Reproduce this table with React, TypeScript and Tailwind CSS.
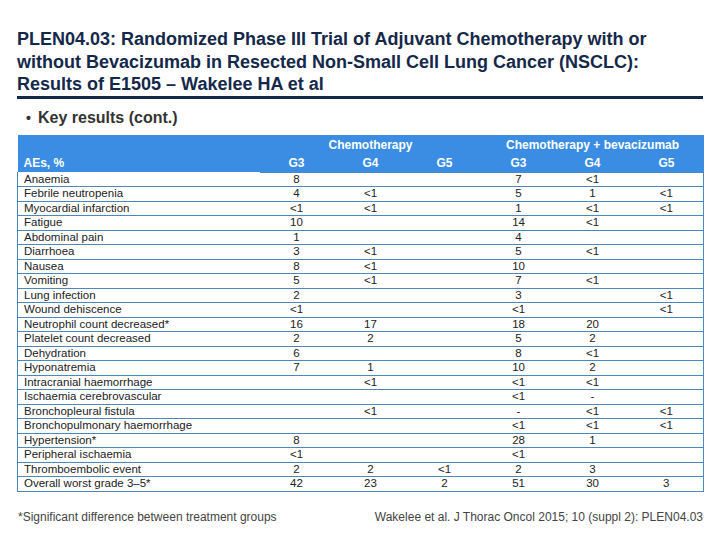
const rows: [string, string, string, string, string, string, string][] = [
  ["Anaemia", "8", "", "", "7", "<1", ""],
  ["Febrile neutropenia", "4", "<1", "", "5", "1", "<1"],
  ["Myocardial infarction", "<1", "<1", "", "1", "<1", "<1"],
  ["Fatigue", "10", "", "", "14", "<1", ""],
  ["Abdominal pain", "1", "", "", "4", "", ""],
  ["Diarrhoea", "3", "<1", "", "5", "<1", ""],
  ["Nausea", "8", "<1", "", "10", "", ""],
  ["Vomiting", "5", "<1", "", "7", "<1", ""],
  ["Lung infection", "2", "", "", "3", "", "<1"],
  ["Wound dehiscence", "<1", "", "", "<1", "", "<1"],
  ["Neutrophil count decreased*", "16", "17", "", "18", "20", ""],
  ["Platelet count decreased", "2", "2", "", "5", "2", ""],
  ["Dehydration", "6", "", "", "8", "<1", ""],
  ["Hyponatremia", "7", "1", "", "10", "2", ""],
  ["Intracranial haemorrhage", "", "<1", "", "<1", "<1", ""],
  ["Ischaemia cerebrovascular", "", "", "", "<1", "-", ""],
  ["Bronchopleural fistula", "", "<1", "", "-", "<1", "<1"],
  ["Bronchopulmonary haemorrhage", "", "", "", "<1", "<1", "<1"],
  ["Hypertension*", "8", "", "", "28", "1", ""],
  ["Peripheral ischaemia", "<1", "", "", "<1", "", ""],
  ["Thromboembolic event", "2", "2", "<1", "2", "3", ""],
  ["Overall worst grade 3–5*", "42", "23", "2", "51", "30", "3"],
];

export default function App() {
  return (
    <div className="w-[720px] h-[540px] bg-white px-[17px] pt-[28px] font-['Liberation_Sans',Arial,sans-serif] overflow-hidden">
      <h1 className="text-[18px] leading-[22.5px] font-bold text-[#14284a] border-b-[3px] border-[#14284a] pb-0">
        PLEN04.03: Randomized Phase III Trial of Adjuvant Chemotherapy with or
        <br />
        without Bevacizumab in Resected Non-Small Cell Lung Cancer (NSCLC):
        <br />
        Results of E1505 – Wakelee HA et al
      </h1>

      <div className="mt-[9px] flex items-center text-[16px] leading-[20px] font-bold text-[#333333]">
        <span className="w-[21px] pl-[9px] text-[14px]">•</span>
        <span>Key results (cont.)</span>
      </div>

      <table className="mt-[7px] w-[686px] table-fixed border-collapse text-[11.5px] text-[#222222]">
        <colgroup>
          <col className="w-[242px]" />
          <col className="w-[74px]" />
          <col className="w-[74px]" />
          <col className="w-[74px]" />
          <col className="w-[74px]" />
          <col className="w-[74px]" />
          <col className="w-[74px]" />
        </colgroup>
        <thead className="bg-[#3a8de3] text-white text-[12px] font-bold">
          <tr className="h-[17px]">
            <th></th>
            <th colSpan={3} className="text-center font-bold pt-[1px]">Chemotherapy</th>
            <th colSpan={3} className="text-center font-bold pt-[1px]">Chemotherapy + bevacizumab</th>
          </tr>
          <tr className="h-[18px]">
            <th className="text-left pl-[6px] font-bold">AEs, %</th>
            <th className="text-center font-bold">G3</th>
            <th className="text-center font-bold">G4</th>
            <th className="text-center font-bold">G5</th>
            <th className="text-center font-bold">G3</th>
            <th className="text-center font-bold">G4</th>
            <th className="text-center font-bold">G5</th>
          </tr>
        </thead>
        <tbody>
          {rows.map((r, i) => (
            <tr key={r[0]} className="h-[14.5px] leading-[13px]">
              <td
                className={`pl-[6px] border-l border-[#4f86bd] ${
                  i === 0 ? "" : "border-t"
                } ${i === rows.length - 1 ? "border-b" : ""}`}
              >
                {r[0]}
              </td>
              {r.slice(1).map((v, j) => (
                <td
                  key={j}
                  className={`text-center border-t border-[#4f86bd] ${
                    j === 5 ? "border-r" : ""
                  } ${i === rows.length - 1 ? "border-b" : ""}`}
                >
                  {v}
                </td>
              ))}
            </tr>
          ))}
        </tbody>
      </table>

      <div className="mt-[16px] flex justify-between items-baseline text-[12px] text-[#444444]">
        <span className="pl-[1px]">*Significant difference between treatment groups</span>
        <span>Wakelee et al. J Thorac Oncol 2015; 10 (suppl 2): PLEN04.03</span>
      </div>
    </div>
  );
}
